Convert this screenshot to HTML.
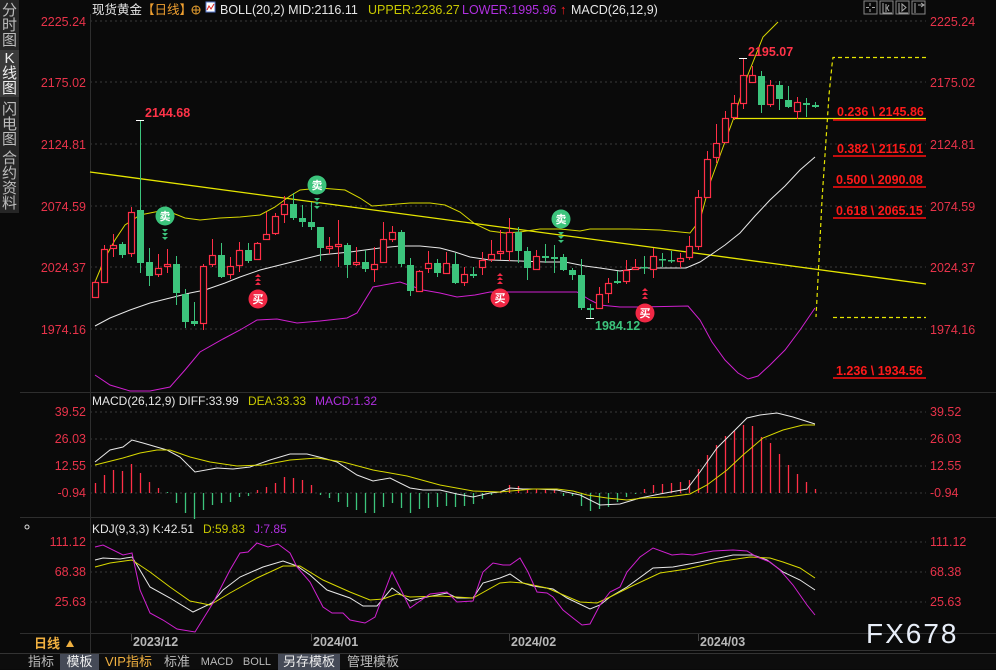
<!DOCTYPE html>
<html><head><meta charset="utf-8">
<style>
*{margin:0;padding:0;box-sizing:border-box}
body{width:996px;height:669px;background:#0a0a0a;overflow:hidden;position:relative;font-family:"Liberation Sans","Noto Sans CJK SC",sans-serif}
.side{position:absolute;left:0;top:0;width:19px;height:213px;background:#262626}
.side div{position:absolute;left:0;width:19px;color:#bdbdbd;font-size:15px;line-height:15px;text-align:center;padding-top:1px}
.tabs{position:absolute;left:0;top:653px;width:996px;height:16px;background:#0d0d0d;border-top:1px solid #333}
.tabs span{position:absolute;top:0;height:16px;font-size:13px;line-height:16px;color:#bbb;text-align:center}
svg{position:absolute;left:0;top:0}
</style></head><body>
<div class="side">
<div style="top:2px;height:46px">分<br>时<br>图</div>
<div style="top:50px;height:47px;background:#3a3a3a;color:#eee">K<br>线<br>图</div>
<div style="top:101px;height:46px">闪<br>电<br>图</div>
<div style="top:150px;height:63px">合<br>约<br>资<br>料</div>
</div>
<svg width="996" height="669" xmlns="http://www.w3.org/2000/svg" font-family="Liberation Sans, Noto Sans CJK SC, sans-serif">
<g id="grid" stroke="#3a3a3a" stroke-dasharray="2,3" stroke-width="1">
<line x1="90" x2="926" y1="21" y2="21"/><line x1="90" x2="926" y1="82" y2="82"/><line x1="90" x2="926" y1="144" y2="144"/><line x1="90" x2="926" y1="206" y2="206"/><line x1="90" x2="926" y1="267" y2="267"/><line x1="90" x2="926" y1="329" y2="329"/>
<line x1="90" x2="926" y1="412" y2="412"/><line x1="90" x2="926" y1="439" y2="439"/><line x1="90" x2="926" y1="466" y2="466"/><line x1="90" x2="926" y1="493" y2="493"/>
<line x1="90" x2="926" y1="542" y2="542"/><line x1="90" x2="926" y1="572" y2="572"/><line x1="90" x2="926" y1="602" y2="602"/>
</g>
<g stroke="#2e2e2e" stroke-width="1">
<line x1="90.5" x2="90.5" y1="14" y2="653"/>
<line x1="20" x2="996" y1="392.5" y2="392.5"/>
<line x1="20" x2="996" y1="517.5" y2="517.5"/>
<line x1="20" x2="996" y1="633.5" y2="633.5"/>
</g>
<g fill="#e8334a" font-size="12.5" text-anchor="end">
<text x="86" y="26">2225.24</text><text x="86" y="87">2175.02</text><text x="86" y="149">2124.81</text><text x="86" y="211">2074.59</text><text x="86" y="272">2024.37</text><text x="86" y="334">1974.16</text>
<text x="86" y="416">39.52</text><text x="86" y="443">26.03</text><text x="86" y="470">12.55</text><text x="86" y="497">-0.94</text>
<text x="86" y="546">111.12</text><text x="86" y="576">68.38</text><text x="86" y="606">25.63</text>
</g>
<g fill="#e8334a" font-size="12.5">
<text x="930" y="26">2225.24</text><text x="930" y="87">2175.02</text><text x="930" y="149">2124.81</text><text x="930" y="211">2074.59</text><text x="930" y="272">2024.37</text><text x="930" y="334">1974.16</text>
<text x="930" y="416">39.52</text><text x="930" y="443">26.03</text><text x="930" y="470">12.55</text><text x="930" y="497">-0.94</text>
<text x="930" y="546">111.12</text><text x="930" y="576">68.38</text><text x="930" y="606">25.63</text>
</g>
<text x="92" y="14" font-size="12.5" fill="#e6e6e6">现货黄金<tspan fill="#f0a030">【日线】</tspan></text>
<circle cx="196" cy="10" r="4" fill="none" stroke="#e8a030" stroke-width="1"/><line x1="192" x2="200" y1="10" y2="10" stroke="#e8a030"/><line x1="196" x2="196" y1="6" y2="14" stroke="#e8a030"/>
<rect x="206" y="2" width="9" height="10" fill="#fff" stroke="#5577cc"/><polyline points="207,10 209,6 211,9 214,4" fill="none" stroke="#dd2222"/>
<text x="220" y="14" font-size="12.5" fill="#e6e6e6">BOLL(20,2) MID:2116.11</text>
<text x="368" y="14" font-size="12.5" fill="#c8c800">UPPER:2236.27</text>
<text x="462" y="14" font-size="12.5" fill="#b030e0">LOWER:1995.96</text>
<text x="560" y="14" font-size="13" fill="#ff2020" font-weight="bold">↑</text>
<text x="571" y="14" font-size="12.5" fill="#e6e6e6">MACD(26,12,9)</text>
<g fill="none" stroke="#888">
<rect x="864" y="1" width="13" height="13"/><rect x="880" y="1" width="13" height="13"/><rect x="896" y="1" width="13" height="13"/><rect x="912" y="1" width="13" height="13"/>
</g>
<g stroke="#aaa" fill="none"><path d="M870 3v3M870 9v3M866 7.5h3M872 7.5h3M883 3v10h9M886 4v8M889 5l-2 3 2 3M899 3v10h9M902 4v7l4-3.5zM915 3v10M918 5h6M921 3l3 2-3 2"/></g>
<line x1="90" y1="172" x2="926" y2="284" stroke="#e6e600" stroke-width="1.3"/>
<polyline fill="none" stroke="#d8d800" stroke-width="1" points="95,282 105,258 115,240 125,225 140,215 155,212 165,210 175,214 185,218 200,220 220,218 240,217 260,215 275,207 290,196 300,190 310,189 320,188 345,190 360,198 372,206 385,205 410,203 430,203 445,205 460,212 475,224 490,231 505,233 520,232 540,229 560,229 580,231 590,229 605,229 630,229 660,230 690,233 700,220 710,183 722,150 733,120 747,77 763,37 778,22"/>
<polyline fill="none" stroke="#e8e8e8" stroke-width="1" points="95,326 110,318 130,310 150,303 170,298 190,293 205,290 225,283 240,277 260,270 280,265 300,260 320,255 350,252 380,248 400,246 420,246 440,248 455,252 470,257 490,260 520,261 545,262 565,262 585,266 600,268 620,271 640,268 660,268 686,268 700,262 712,254 725,245 740,233 755,216 770,200 785,186 800,170 815,157"/>
<polyline fill="none" stroke="#d020d0" stroke-width="1" points="95,375 110,385 130,391 150,391 170,387 185,370 200,352 223,339 240,330 257,320 277,319 297,323 320,321 347,318 357,313 373,287 400,282 423,290 440,293 457,297 475,295 490,292 520,292 560,292 577,292 590,300 600,305 620,307 640,307 688,306 700,320 712,342 725,360 738,373 748,379 758,376 770,365 785,350 800,330 815,308"/>
<line x1="733" y1="118.5" x2="926" y2="118.5" stroke="#e6e600" stroke-width="1.3"/>
<g stroke="#ff1010" stroke-width="1.5"><line x1="833" x2="926" y1="120" y2="120"/><line x1="833" x2="926" y1="156" y2="156"/><line x1="833" x2="926" y1="187" y2="187"/><line x1="833" x2="926" y1="218" y2="218"/><line x1="833" x2="926" y1="378" y2="378"/></g>
<g fill="#ff1a1a" font-size="12.5" font-weight="bold">
<text x="837" y="116">0.236 \ 2145.86</text><text x="837" y="153">0.382 \ 2115.01</text><text x="836" y="184">0.500 \ 2090.08</text><text x="836" y="215">0.618 \ 2065.15</text><text x="836" y="375">1.236 \ 1934.56</text>
</g>
<g fill="none" stroke="#e6e600" stroke-width="1.2" stroke-dasharray="4,3">
<polyline points="926,57.5 833,57.5 832,65 829,95 826,140 822,200 819,260 816,317"/>
<line x1="833" x2="926" y1="317.5" y2="317.5"/>
</g>
<g id="candles"></g>
<text x="145" y="117" font-size="12.5" font-weight="bold" fill="#ff3348">2144.68</text>
<text x="748" y="56" font-size="12.5" font-weight="bold" fill="#ff3348">2195.07</text>
<text x="595" y="330" font-size="12.5" font-weight="bold" fill="#3cc47c">1984.12</text>
<g stroke="#fff" stroke-width="1"><line x1="136" x2="144" y1="120.5" y2="120.5"/><line x1="739" x2="747" y1="58.5" y2="58.5"/><line x1="586" x2="594" y1="318.5" y2="318.5"/></g>
<g font-size="11" text-anchor="middle" font-weight="bold">
<circle cx="165" cy="216" r="9.5" fill="#3cc47c"/><text x="165" y="220" fill="#fff">卖</text>
<circle cx="317" cy="185" r="9.5" fill="#3cc47c"/><text x="317" y="189" fill="#fff">卖</text>
<circle cx="561" cy="219" r="9.5" fill="#3cc47c"/><text x="561" y="223" fill="#fff">卖</text>
<circle cx="258" cy="299" r="9.5" fill="#f02845"/><text x="258" y="303" fill="#fff">买</text>
<circle cx="500" cy="298" r="9.5" fill="#f02845"/><text x="500" y="302" fill="#fff">买</text>
<circle cx="645" cy="313" r="9.5" fill="#f02845"/><text x="645" y="317" fill="#fff">买</text>
</g>
<g id="tri"></g>
<text x="92" y="405" font-size="12" fill="#e6e6e6">MACD(26,12,9) DIFF:33.99</text>
<text x="248" y="405" font-size="12" fill="#c8c800">DEA:33.33</text>
<text x="315" y="405" font-size="12" fill="#b030e0">MACD:1.32</text>
<g id="bars"></g>
<polyline fill="none" stroke="#e8e8e8" stroke-width="1" points="95,462 110,450 123,447 132,440 143,443 167,450 180,457 195,472 217,468 233,469 250,467 270,460 290,454 307,454 323,458 337,462 357,475 373,481 390,478 410,488 423,490 440,490 457,494 473,497 490,493 500,492 510,488 523,489 537,489 557,490 580,495 600,505 620,504 640,498 660,494 687,489 700,472 717,448 733,432 747,418 760,415 777,413 793,417 815,424"/>
<polyline fill="none" stroke="#d8d800" stroke-width="1" points="95,465 123,458 140,453 157,450 170,450 190,457 210,462 237,466 263,465 290,460 317,458 343,462 373,470 407,476 440,485 473,491 500,492 533,489 557,489 573,491 587,495 607,498 627,500 643,498 667,497 690,494 707,485 727,470 743,455 763,438 783,430 803,425 815,425"/>
<circle cx="27" cy="527" r="2" fill="none" stroke="#ddd"/>
<text x="92" y="533" font-size="12" fill="#e6e6e6">KDJ(9,3,3) K:42.51</text>
<text x="203" y="533" font-size="12" fill="#c8c800">D:59.83</text>
<text x="254" y="533" font-size="12" fill="#b030e0">J:7.85</text>
<polyline fill="none" stroke="#e8e8e8" stroke-width="1" points="95,560 103,558 120,559 132,557 137,565 150,587 170,598 193,612 212,603 223,590 240,577 263,567 283,561 297,566 310,575 327,590 350,598 363,606 377,606 392,588 410,601 427,597 447,593 457,598 473,598 483,583 500,578 510,574 523,583 533,586 553,589 567,598 590,609 600,605 610,597 627,587 653,568 673,567 700,562 733,555 753,555 767,560 783,572 800,580 815,590"/>
<polyline fill="none" stroke="#d8d800" stroke-width="1" points="95,567 110,563 132,560 150,572 170,587 190,601 210,605 230,593 257,578 283,566 300,566 323,580 350,592 370,600 383,599 397,594 410,597 440,596 473,598 500,583 510,582 523,583 547,588 580,602 597,603 610,597 630,587 660,573 687,569 717,562 750,557 770,558 783,562 800,568 815,578"/>
<polyline fill="none" stroke="#d020d0" stroke-width="1" points="95,547 103,545 123,555 132,553 140,590 150,613 163,620 177,629 195,632 213,603 230,570 240,553 248,552 257,543 268,547 278,544 290,553 297,567 310,582 323,607 332,613 343,613 350,620 365,623 375,617 392,572 410,608 430,594 447,592 457,602 473,601 483,572 493,563 503,565 510,565 520,558 528,572 537,592 547,593 553,597 563,610 573,618 582,625 590,624 600,605 610,592 620,587 627,572 640,557 653,548 672,555 682,554 693,555 713,551 733,550 747,551 757,557 770,562 780,570 793,585 807,605 815,615"/>
<text x="34" y="648" font-size="13" font-weight="bold" fill="#f0b040">日线</text>
<path d="M66 647l4-7 4 7z" fill="#f0b040"/>
<g stroke="#444"><line x1="131.5" x2="131.5" y1="634" y2="641"/><line x1="311.5" x2="311.5" y1="634" y2="641"/><line x1="509.5" x2="509.5" y1="634" y2="641"/><line x1="698.5" x2="698.5" y1="634" y2="641"/></g>
<g font-size="12.5" font-weight="bold" fill="#b8b8b8">
<text x="133" y="646">2023/12</text><text x="313" y="646">2024/01</text><text x="511" y="646">2024/02</text><text x="700" y="646">2024/03</text>
</g>
<line x1="620" x2="920" y1="650.5" y2="650.5" stroke="#333"/>
<text x="866" y="643" font-size="28" fill="#e8eef8" letter-spacing="2">FX678</text>
</svg>
<div class="tabs">
<span style="left:22px;width:38px">指标</span>
<span style="left:60px;width:39px;background:#454a57;color:#eee">模板</span>
<span style="left:100px;width:57px;color:#f0b040">VIP指标</span>
<span style="left:158px;width:38px">标准</span>
<span style="left:198px;width:38px;font-size:11px">MACD</span>
<span style="left:238px;width:38px;font-size:11px">BOLL</span>
<span style="left:278px;width:62px;background:#454a57;color:#eee">另存模板</span>
<span style="left:342px;width:62px">管理模板</span>
</div>
<script>
var C=[[95,282,297,280,297,1],[104,249,282,245,283,1],[113,245,248,234,257,1],[122,244,255,242,258,0],[131,212,253,207,257,1],[140,210,263,120,273,0],[149,262,276,248,286,0],[158,268,274,254,277,1],[167,264,266,249,273,1],[176,264,293,256,305,0],[185,294,322,289,328,0],[194,321,324,302,326,0],[203,266,323,264,330,1],[212,255,264,239,267,1],[221,255,277,243,278,0],[230,266,274,257,279,1],[239,250,265,242,272,1],[248,250,261,243,263,0],[257,243,259,242,260,1],[266,234,239,212,240,1],[275,216,233,213,235,1],[284,204,214,196,223,1],[293,204,218,193,220,0],[302,218,222,205,227,0],[311,222,227,202,230,0],[320,227,248,227,261,0],[329,246,248,237,254,1],[338,244,246,220,267,1],[347,245,265,243,278,0],[356,262,264,247,266,1],[365,262,269,250,272,0],[374,264,269,247,282,1],[383,239,262,222,263,1],[392,232,239,226,242,1],[401,232,264,230,267,0],[410,265,291,258,296,0],[419,271,291,270,292,1],[428,263,268,251,273,1],[437,263,273,259,277,0],[446,263,273,252,274,1],[455,264,283,253,284,0],[464,274,282,267,286,1],[473,274,276,267,278,0],[482,260,267,252,275,1],[491,254,259,240,262,1],[500,251,253,230,260,1],[509,232,251,218,261,1],[518,232,251,227,263,0],[527,251,268,247,280,0],[536,256,269,250,270,1],[545,256,258,244,263,0],[554,257,259,245,273,0],[563,257,270,254,271,0],[572,270,275,268,280,0],[581,275,308,259,310,0],[590,308,310,304,318,0],[599,294,308,287,309,1],[608,283,293,278,303,1],[617,281,283,271,284,0],[626,270,281,260,284,1],[635,267,269,259,270,1],[644,267,268,256,274,0],[653,256,269,248,278,1],[662,259,260,253,267,0],[671,260,261,251,263,0],[680,258,261,253,268,1],[689,246,257,236,260,1],[698,197,246,190,250,1],[707,159,197,151,198,1],[716,143,157,124,163,1],[725,118,142,111,143,1],[734,103,117,95,120,1],[743,75,103,58,109,1],[752,75,82,66,83,1],[761,76,105,71,113,0],[770,85,104,80,107,1],[779,85,99,81,110,0],[788,100,107,86,108,0],[797,102,111,97,119,1],[806,103,105,98,117,0],[815,105,107,102,108,0]];
var s='';C.forEach(function(c){var x=c[0],col=c[5]?'#ff2f47':'#3cc47c';s+='<line x1="'+(x+.5)+'" x2="'+(x+.5)+'" y1="'+c[3]+'" y2="'+c[4]+'" stroke="'+col+'"/>';var h=Math.max(c[2]-c[1],1.5);if(c[5])s+='<rect x="'+(x-2.5)+'" y="'+(c[1]+.5)+'" width="6" height="'+h+'" fill="#0a0a0a" stroke="'+col+'" stroke-width="1.2"/>';else s+='<rect x="'+(x-3)+'" y="'+c[1]+'" width="7" height="'+h+'" fill="'+col+'"/>';});
document.getElementById('candles').innerHTML=s;
var B=[483,475,470,471,464,473,482,488,493,503,513,519,510,505,503,502,497,496,490,487,483,477,478,480,485,495,498,502,507,510,513,513,507,503,508,513,509,508,507,506,507,506,504,499,495,492,485,486,489,489,490,490,496,496,506,511,509,507,502,497,494,489,485,484,483,482,480,469,455,445,436,431,425,426,437,443,454,465,474,482,489];
var b='';B.forEach(function(y,i){var x=95+9*i+.5;var col=y<493?'#ff2f47':'#3cc47c';if(Math.abs(y-493)<1)y=492;b+='<line x1="'+x+'" x2="'+x+'" y1="493" y2="'+y+'" stroke="'+col+'" stroke-width="1.3"/>';});
document.getElementById('bars').innerHTML=b;
var t='';[[165,229,1],[317,198,1],[561,232,1]].forEach(function(p){for(var k=0;k<3;k++){var y=p[1]+k*4;t+='<path d="M'+(p[0]-3)+' '+y+'h6l-3 3z" fill="#3cc47c"/>';}});
[[258,274],[500,273],[645,288]].forEach(function(p){for(var k=0;k<3;k++){var y=p[1]+k*4;t+='<path d="M'+(p[0]-3)+' '+(y+3)+'h6l-3-3z" fill="#f02845"/>';}});
document.getElementById('tri').innerHTML=t;
</script>
</body></html>
